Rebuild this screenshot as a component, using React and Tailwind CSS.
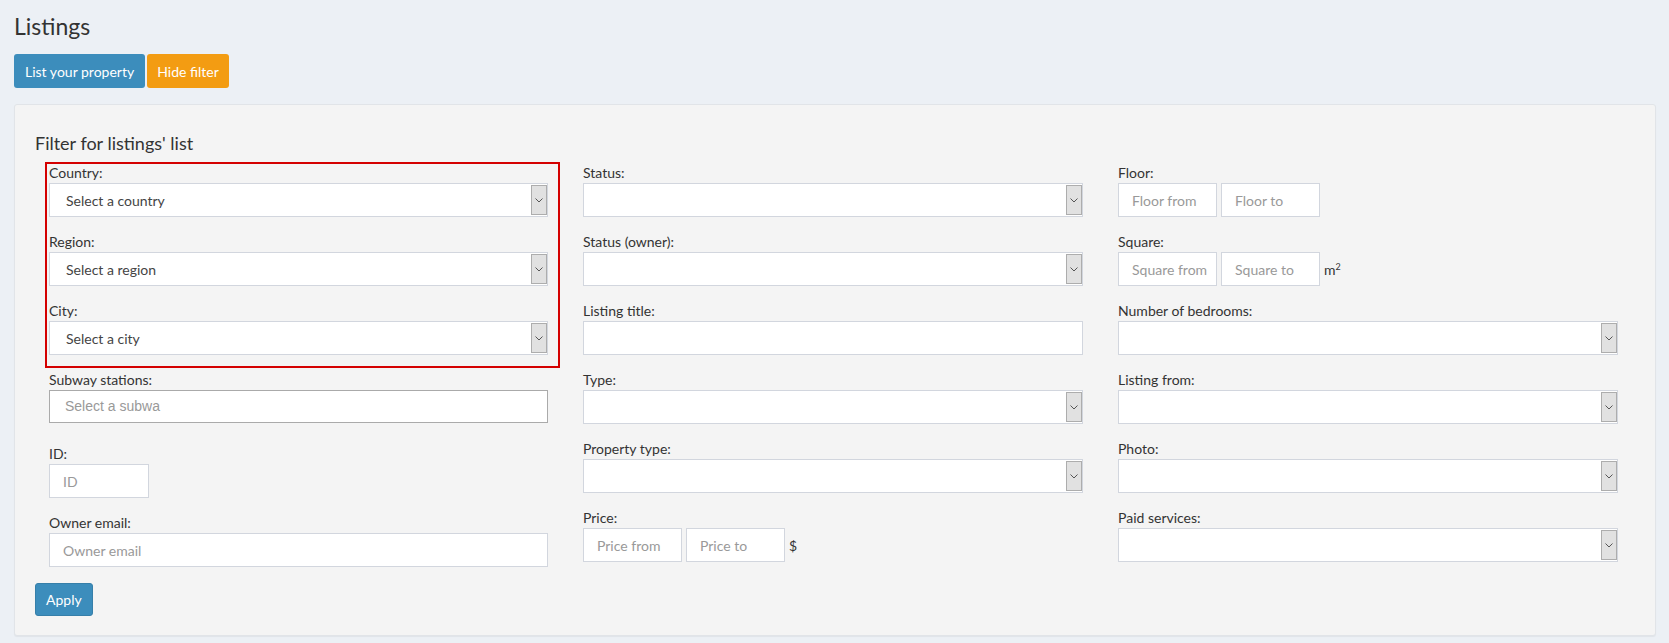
import React from "react";

const FONT = { fontFamily: "Lato, 'Open Sans', Arial, sans-serif" };

function Chevron() {
  return (
    <svg width="8" height="5" viewBox="0 0 8 5" fill="none">
      <path d="M0.5 0.5 L4 4 L7.5 0.5" stroke="#555" strokeWidth="1" />
    </svg>
  );
}

function Select({ value }) {
  return (
    <div className="flex h-[34px] items-stretch border border-[#d2d6de] bg-white">
      <div className="flex flex-1 items-center pl-[16px] text-[14px] text-[#444]">{value}</div>
      <div className="my-[1px] flex w-[16px] items-center justify-center border border-[#adadad] bg-[#e1e1e1]">
        <Chevron />
      </div>
    </div>
  );
}

function TextInput({ placeholder, className = "" }) {
  return (
    <div
      className={`flex h-[34px] items-center border border-[#d2d6de] bg-white pl-[13px] text-[14px] text-[#999] ${className}`}
    >
      {placeholder}
    </div>
  );
}

function Field({ label, children, className = "" }) {
  return (
    <div className={`mb-[15px] ${className}`}>
      <label className="block h-[20px] text-[14px] leading-[20px] text-[#333]">{label}</label>
      {children}
    </div>
  );
}

function Range({ from, to, unit }) {
  return (
    <div className="flex items-center gap-[4px]">
      <TextInput placeholder={from} className="w-[99px]" />
      <TextInput placeholder={to} className="w-[99px]" />
      {unit}
    </div>
  );
}

export default function App() {
  return (
    <div className="min-h-screen bg-[#ecf0f5] px-[14px] pb-[8px]" style={FONT}>
      <h1 className="pt-[12px] text-[23px] leading-[28px] text-[#333]">Listings</h1>

      <div className="mt-[14px] flex gap-[2px]">
        <button className="h-[34px] rounded-[3px] bg-[#3c8dbc] px-[11px] text-[14px] text-white">
          List your property
        </button>
        <button className="h-[34px] rounded-[3px] bg-[#f39c12] px-[10px] text-[14px] text-white">
          Hide filter
        </button>
      </div>

      <div className="mr-[-1px] mt-[16px] rounded-[3px] border border-[#e1e4e8] bg-[#f4f4f4] px-[20px] pb-[19px] pt-[26px] shadow-[0_1px_1px_rgba(0,0,0,0.05)]">
        <h3 className="text-[18px] leading-[24px] text-[#333]">Filter for listings' list</h3>

        <div className="mt-[8px] grid grid-cols-[499px_500px_500px] gap-x-[35px] pl-[14px]">
          <div className="relative">
            <div className="pointer-events-none absolute left-[-4px] top-[-1px] h-[206px] w-[515px] border-2 border-[#d40000]" />
            <Field label="Country:">
              <Select value="Select a country" />
            </Field>
            <Field label="Region:">
              <Select value="Select a region" />
            </Field>
            <Field label="City:">
              <Select value="Select a city" />
            </Field>
            <Field label="Subway stations:" className="mb-[21px]">
              <div
                className="flex h-[33px] items-center border border-[#aaa] bg-white pl-[15px] text-[14px] text-[#999]"
                style={{ fontFamily: "'Liberation Sans', Arial, sans-serif" }}
              >
                Select a subwa
              </div>
            </Field>
            <Field label="ID:">
              <TextInput placeholder="ID" className="w-[100px]" />
            </Field>
            <Field label="Owner email:">
              <TextInput placeholder="Owner email" />
            </Field>
          </div>

          <div>
            <Field label="Status:">
              <Select />
            </Field>
            <Field label="Status (owner):">
              <Select />
            </Field>
            <Field label="Listing title:">
              <div className="h-[34px] border border-[#d2d6de] bg-white" />
            </Field>
            <Field label="Type:">
              <Select />
            </Field>
            <Field label="Property type:">
              <Select />
            </Field>
            <Field label="Price:">
              <Range from="Price from" to="Price to" unit={<span className="text-[14px] text-[#333]">$</span>} />
            </Field>
          </div>

          <div>
            <Field label="Floor:">
              <Range from="Floor from" to="Floor to" />
            </Field>
            <Field label="Square:">
              <Range
                from="Square from"
                to="Square to"
                unit={
                  <span className="text-[14px] text-[#333]">
                    m<sup className="text-[9px]">2</sup>
                  </span>
                }
              />
            </Field>
            <Field label="Number of bedrooms:">
              <Select />
            </Field>
            <Field label="Listing from:">
              <Select />
            </Field>
            <Field label="Photo:">
              <Select />
            </Field>
            <Field label="Paid services:">
              <Select />
            </Field>
          </div>
        </div>

        <button className="mt-[1px] h-[33px] rounded-[3px] border border-[#367fa9] bg-[#3c8dbc] px-[10px] text-[14px] text-white">
          Apply
        </button>
      </div>
    </div>
  );
}
